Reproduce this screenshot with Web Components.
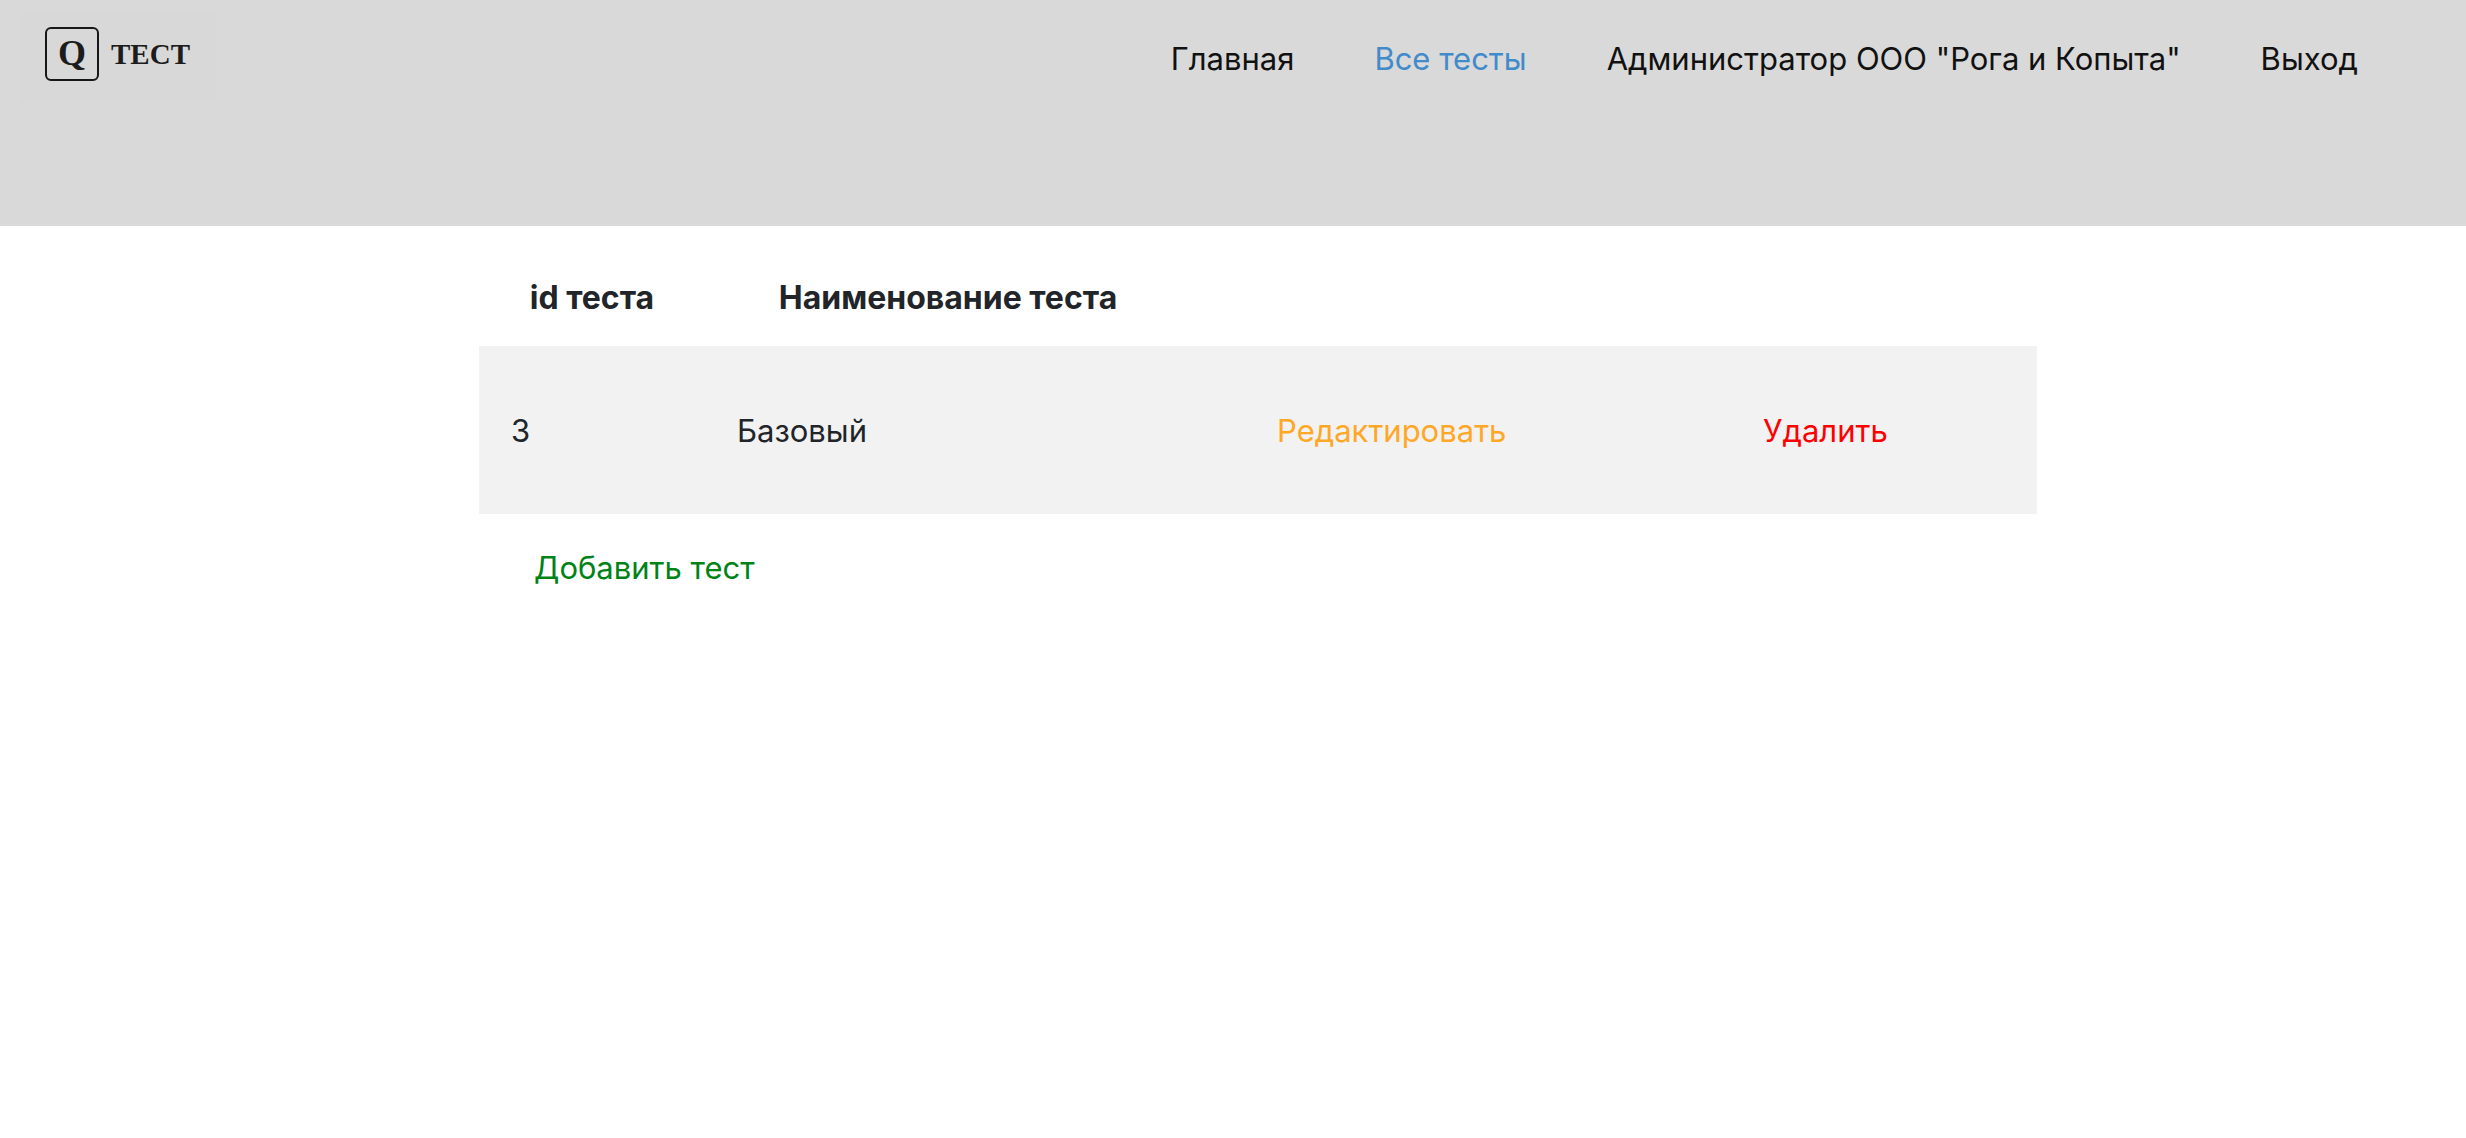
<!DOCTYPE html>
<html lang="ru">
<head>
<meta charset="utf-8">
<meta name="viewport" content="width=device-width, initial-scale=1">
<title>Все тесты</title>
<style>
body { margin: 0; background: #fff; color: #212529; font: 31px/48px Inter, "Liberation Sans", sans-serif; }
</style>
</head>
<body>
<site-header>
  <brand-logo slot="brand"></brand-logo>
  <nav-link href="#home">Главная</nav-link>
  <nav-link href="#tests" active>Все тесты</nav-link>
  <nav-link href="#account">Администратор ООО "Рога и Копыта"</nav-link>
  <nav-link href="#logout">Выход</nav-link>
</site-header>
<tests-page></tests-page>

<script>
class BaseElement extends HTMLElement {
  constructor() {
    super();
    this.attachShadow({ mode: "open" });
  }
  connectedCallback() {
    this.shadowRoot.innerHTML = this.render();
  }
}

class BrandLogo extends BaseElement {
  render() {
    return `
      <style>
        :host { display: block; }
        a { display: flex; align-items: center; gap: 12px; padding: 14px 26px 20px 24px;
            background: #d8d8d8; color: #1c1c1c; text-decoration: none;
            font-family: "Liberation Serif", serif; font-weight: 700; }
        .mark { box-sizing: border-box; width: 54px; height: 54px; border: 2px solid #161616;
                border-radius: 6px; font-size: 36px; line-height: 48px; text-align: center; }
        .name { font-size: 29px; line-height: 54px; }
      </style>
      <a href="#home"><span class="mark">Q</span><span class="name">ТЕСТ</span></a>`;
  }
}

class NavLink extends BaseElement {
  render() {
    return `
      <style>
        :host { display: block; }
        a { color: #111; text-decoration: none; white-space: nowrap; }
        :host([active]) a { color: #428bca; }
      </style>
      <a href="${this.getAttribute("href")}"><slot></slot></a>`;
  }
}

class SiteHeader extends BaseElement {
  render() {
    return `
      <style>
        :host { display: block; background: #d9d9d9; }
        header { display: flex; align-items: flex-start; justify-content: space-between;
                 box-sizing: border-box; min-height: 226px; padding: 13px 108px 0 21px; }
        nav { display: flex; gap: 80px; padding-top: 22px; }
      </style>
      <header><slot name="brand"></slot><nav><slot></slot></nav></header>`;
  }
}

class ActionLink extends BaseElement {
  render() {
    return `
      <style>
        :host { display: block; }
        a { color: #008316; text-decoration: none; }
        :host([kind="edit"]) a { color: #ffa726; }
        :host([kind="delete"]) a { color: #ff0000; }
      </style>
      <a href="${this.getAttribute("href")}"><slot></slot></a>`;
  }
}

class TestsTable extends BaseElement {
  render() {
    return `
      <style>
        :host { display: block; }
        table { width: 100%; table-layout: fixed; border-collapse: collapse; }
        .id { width: 226px; }
        .name, .edit { width: 486px; }
        th { padding: 24px 0; font-size: 32px; font-weight: 700; text-align: center; }
        td { padding: 61px 0 59px 32px; background: #f2f2f2; }
        td.action { padding-left: 86px; }
      </style>
      <table>
        <colgroup><col class="id"><col class="name"><col class="edit"><col></colgroup>
        <thead><tr><th>id теста</th><th>Наименование теста</th><th></th><th></th></tr></thead>
        <tbody><tr>
          <td>3</td>
          <td>Базовый</td>
          <td class="action"><action-link kind="edit" href="#edit-3">Редактировать</action-link></td>
          <td class="action"><action-link kind="delete" href="#delete-3">Удалить</action-link></td>
        </tr></tbody>
      </table>`;
  }
}

class TestsPage extends BaseElement {
  render() {
    return `
      <style>
        :host { display: block; }
        main { padding: 24px 429px 24px 479px; }
        .add { padding: 30px 55px; }
      </style>
      <main>
        <tests-table></tests-table>
        <div class="add"><action-link href="#add">Добавить тест</action-link></div>
      </main>`;
  }
}

customElements.define("brand-logo", BrandLogo);
customElements.define("nav-link", NavLink);
customElements.define("site-header", SiteHeader);
customElements.define("action-link", ActionLink);
customElements.define("tests-table", TestsTable);
customElements.define("tests-page", TestsPage);
</script>
</body>
</html>
